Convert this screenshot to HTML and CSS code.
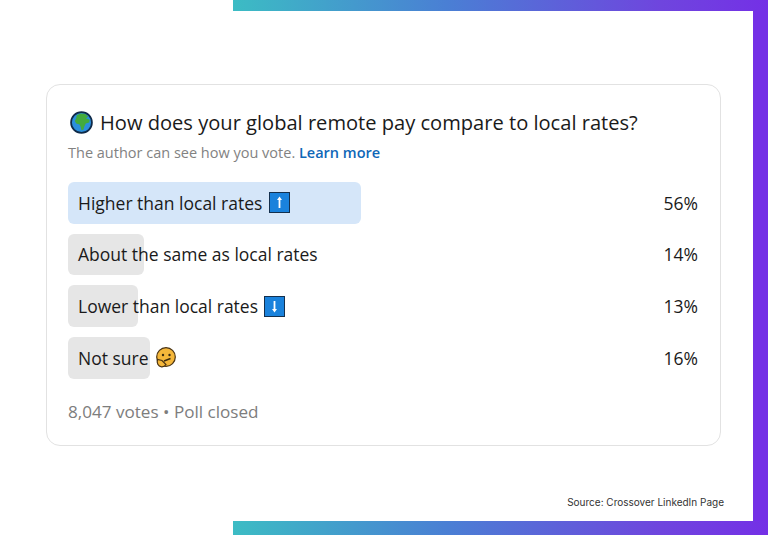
FILE: index.html
```html
<!DOCTYPE html>
<html>

<head>
    <meta charset="utf-8">
    <title>Global remote pay poll</title>
    <link rel="stylesheet" href="styles.css">
</head>

<body>
    <div class="page">
        <div class="stripe stripe-top"></div>
        <div class="middle">
            <div class="card">
                <div class="question">
                    <svg class="globe" viewBox="0 0 24 24" width="23" height="23">
                        <circle cx="12" cy="12" r="10.9" fill="#2b8fdc" stroke="#0f2a48" stroke-width="1.8"></circle>
                        <path d="M7 4.5 L11 2.6 L16 3 L19 6 L16.5 7.5 L20.5 9 L20 12 L16.5 13 L15 16 L14 19.5 L12 20 L11 16.5 L10 14 L6.5 13 L5 10.5 L6.5 7.5 Z" fill="#43ab3c"></path>
                    </svg>
                    <span>How does your global remote pay compare to local rates?</span>
                </div>
                <div class="note">The author can see how you vote. <a class="learn" href="#">Learn more</a></div>

                <div class="options">
                    <div class="option">
                        <div class="bar bar-win" style="width: 293px"></div>
                        <div class="label">Higher than local rates
                            <svg class="arrow-box" viewBox="0 0 21 21" width="21" height="21">
                                <rect x="0.5" y="0.5" width="20" height="20" fill="#1a82dc" stroke="#14304e"></rect>
                                <path d="M10.5 4.5 L13 8 L11.4 8 L11.4 16 L9.6 16 L9.6 8 L8 8 Z" fill="#fff"></path>
                            </svg>
                        </div>
                        <div class="pct">56%</div>
                    </div>
                    <div class="option">
                        <div class="bar" style="width: 76px"></div>
                        <div class="label">About the same as local rates</div>
                        <div class="pct">14%</div>
                    </div>
                    <div class="option">
                        <div class="bar" style="width: 70px"></div>
                        <div class="label">Lower than local rates
                            <svg class="arrow-box arrow-down" viewBox="0 0 21 21" width="21" height="21">
                                <rect x="0.5" y="0.5" width="20" height="20" fill="#1a82dc" stroke="#14304e"></rect>
                                <path d="M10.5 16.5 L13 13 L11.4 13 L11.4 5 L9.6 5 L9.6 13 L8 13 Z" fill="#fff"></path>
                            </svg>
                        </div>
                        <div class="pct">13%</div>
                    </div>
                    <div class="option">
                        <div class="bar" style="width: 82px"></div>
                        <div class="label">Not sure
                            <svg class="thinking" viewBox="0 0 21 21" width="21" height="21">
                                <circle cx="11" cy="10" r="9.3" fill="#f5b73a" stroke="#4a3312" stroke-width="1.2"></circle>
                                <path d="M2.5 12.5 C1.5 16 3 19.5 6.5 19.8 C8.5 20 10 19 11 17.5 L7 13.5 Z" fill="#f5b73a" stroke="#4a3312" stroke-width="1.2"></path>
                                <circle cx="8" cy="8" r="1.2" fill="#3a2a10"></circle>
                                <circle cx="14.5" cy="8" r="1.2" fill="#3a2a10"></circle>
                                <path d="M9 14 L15.5 11.5" stroke="#3a2a10" stroke-width="1.4" fill="none"></path>
                            </svg>
                        </div>
                        <div class="pct">16%</div>
                    </div>
                </div>

                <div class="votes">8,047 votes • Poll closed</div>
            </div>
            <div class="source">Source: Crossover LinkedIn Page</div>
        </div>
        <div class="stripe stripe-bottom"></div>
    </div>
</body>

</html>
```

FILE: styles.css
```css
html,
body {
    margin: 0;
    padding: 0;
    background-color: #fff;
}

.page {
    display: flex;
    flex-direction: column;
    width: 768px;
    height: 535px;
    overflow: hidden;
    font-family: "Open Sans", "Noto Sans", sans-serif;
}

.stripe {
    margin-left: 233px;
    background: linear-gradient(90deg, #3cbcc4 0%, #4a7fd4 40%, #6f45de 80%, #7430e6 100%);
}

.stripe-top {
    height: 11px;
}

.stripe-bottom {
    height: 14px;
}

.middle {
    flex: 1;
    display: flex;
    flex-direction: column;
    border-right: 15px solid #7430e6;
    padding: 73px 32px 0 46px;
}

.card {
    height: 362px;
    box-sizing: border-box;
    border: 1px solid #e2e2e2;
    border-radius: 14px;
    padding: 22px 21px 0 21px;
}

.question {
    display: flex;
    align-items: center;
    gap: 7px;
    height: 30px;
    font-size: 20.1px;
    font-weight: 500;
    color: #1a1a1a;
}

.globe {
    flex-shrink: 0;
    margin-left: 2px;
}

.note {
    margin-top: 3px;
    height: 26px;
    line-height: 26px;
    font-size: 14.5px;
    color: #828282;
}

.learn {
    color: #0f67b8;
    font-weight: 600;
    text-decoration: none;
}

.options {
    display: flex;
    flex-direction: column;
    gap: 10px;
    margin-top: 16px;
}

.option {
    position: relative;
    display: flex;
    align-items: center;
    justify-content: space-between;
    height: 41.67px;
    padding: 0 1px 0 10px;
    font-size: 17.5px;
    color: #1a1a1a;
}

.bar {
    position: absolute;
    top: 0;
    left: 0;
    height: 100%;
    background-color: #e6e6e6;
    border-radius: 6px;
}

.bar-win {
    background-color: #d5e6f9;
}

.label {
    position: relative;
    display: flex;
    align-items: center;
    gap: 7px;
}

.arrow-down {
    margin-left: -1px;
}

.thinking {
    margin-left: -1px;
}

.pct {
    position: relative;
}

.votes {
    margin-top: 21.5px;
    font-size: 17.1px;
    color: #7d7d7d;
}

.source {
    margin: 50px -3px 0 0;
    text-align: right;
    font-family: Inter, "Liberation Sans", sans-serif;
    font-size: 10px;
    color: #333;
}
```
